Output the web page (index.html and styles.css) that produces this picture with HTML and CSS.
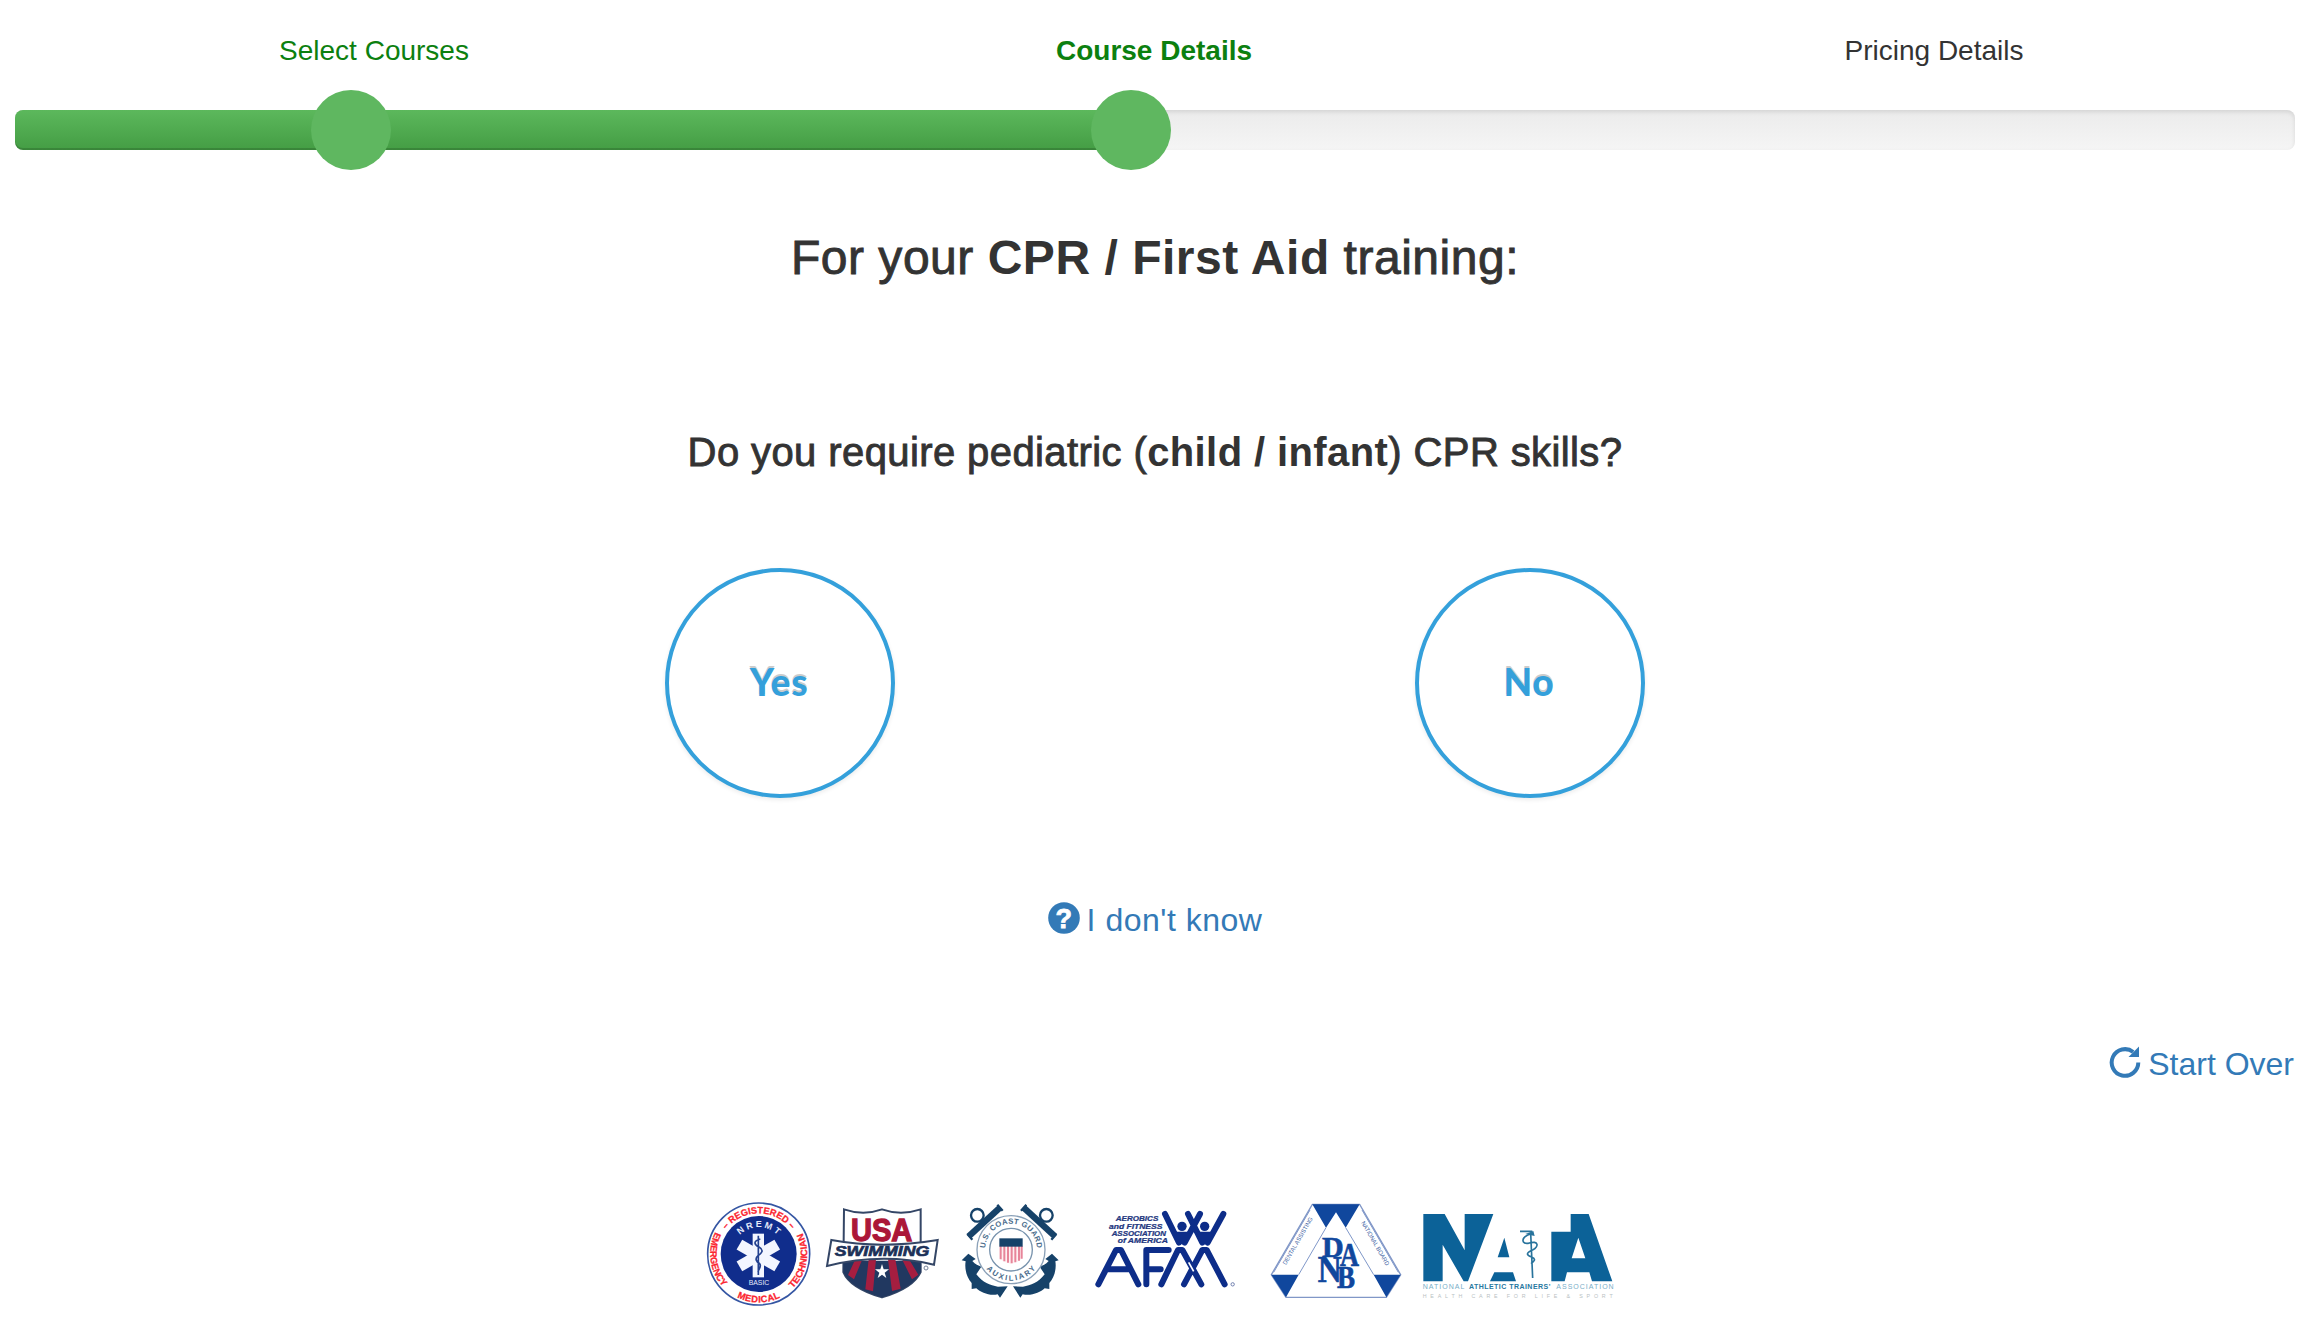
FILE: index.html
```html
<!DOCTYPE html>
<html lang="en">
<head>
<meta charset="utf-8">
<title>Course Details</title>
<link rel="stylesheet" href="styles.css">
</head>
<body>
<main class="wizard">
  <ol class="steps">
    <li class="step done">Select Courses</li>
    <li class="step done current">Course Details</li>
    <li class="step">Pricing Details</li>
  </ol>
  <div class="progress">
    <div class="progress-bar" style="width: 49%"></div>
    <span class="dot dot-first"></span>
    <span class="dot dot-second"></span>
  </div>
  <h1 class="title">For your <b>CPR / First Aid</b> training:</h1>
  <h2 class="question">Do you require pediatric (<b>child / infant</b>) CPR skills?</h2>
  <div class="answers">
    <div class="answer"><button class="round">Yes</button></div>
    <div class="answer"><button class="round">No</button></div>
  </div>
  <a class="link unsure">
    <svg class="icon" viewBox="0 0 32 32"><circle cx="16" cy="16" r="15.8" fill="#337ab7"/><text x="16" y="25.5" font-size="27" font-weight="bold" text-anchor="middle" fill="#fff" stroke="#fff" stroke-width=".8">?</text></svg>
    <span class="unsure-text">I don't know</span>
  </a>
  <a class="link restart">
    <svg class="icon" viewBox="0 0 32 32"><path d="M29.3 16.5A13.3 13.3 0 1 1 24.2 6" fill="none" stroke="#337ab7" stroke-width="4"/><path d="M30 .5V11H19.500Z" fill="#337ab7"/></svg>
    <span class="restart-text">Start Over</span>
  </a>
  <div class="logos">
    <svg width="114" height="108" viewBox="15 30 342 324">
      <defs>
        <path id="ring-top" d="M54 192A122 122 0 0 1 298 192"/>
        <path id="ring-low" d="M73.100 89.100A145.500 145.500 0 1 0 278.900 89.100"/>
        <path id="ring-in" d="M96 192A80 80 0 0 1 256 192"/>
      </defs>
      <circle cx="176" cy="192" r="153" fill="#fff" stroke="#3556a3" stroke-width="5"/>
      <circle cx="176" cy="192" r="114" fill="#102d8c"/>
      <g font-weight="bold" fill="#fb2530" stroke="#fb2530" stroke-width=".8" font-size="28">
        <text><textPath href="#ring-top" startOffset="50%" text-anchor="middle" textLength="226" lengthAdjust="spacingAndGlyphs">– REGISTERED –</textPath></text>
        <text><textPath href="#ring-low" startOffset="46" textLength="176" lengthAdjust="spacingAndGlyphs">EMERGENCY</textPath></text>
        <text><textPath href="#ring-low" startOffset="50%" text-anchor="middle" textLength="134">MEDICAL</textPath></text>
        <text><textPath href="#ring-low" startOffset="456" textLength="180" lengthAdjust="spacingAndGlyphs">TECHNICIAN</textPath></text>
      </g>
      <g fill="#e5ebfb" text-anchor="middle">
        <text font-size="27" font-weight="bold"><textPath href="#ring-in" startOffset="50%" textLength="124">NREMT</textPath></text>
        <text x="177" y="284" font-size="21" textLength="62" lengthAdjust="spacingAndGlyphs">BASIC</text>
      </g>
      <g fill="#f3f6ff"><rect x="158" y="131" width="34" height="131"/><rect x="158" y="131" width="34" height="131" transform="rotate(60 175 196.500)"/><rect x="158" y="131" width="34" height="131" transform="rotate(-60 175 196.500)"/></g>
      <path d="M175 137V255M181 147C155 154 166 166 177 171C194 181 184 191 174 197C163 206 170 216 178 220C187 228 176 236 174 246" fill="none" stroke="#23418f" stroke-width="5"/>
    </svg>
    <svg width="132" height="108" viewBox="357 30 396 324">
      <path d="M432 58Q490 78 546 58Q602 78 662 58V246Q640 294 546 322Q450 294 430 246Z" fill="#fff" stroke="#344666" stroke-width="6"/>
      <path d="M430 212H662V246Q640 294 546 322Q450 294 430 246Z" fill="#213860"/>
      <path d="M466 208H487L462 268L444 255ZM506 208H528L519 304L496 298ZM564 208H586L602 296L576 303ZM606 208H627L655 254L636 268Z" fill="#a51e40"/>
      <path d="M394 150Q546 178 713 150L702 224Q546 187 381 228Z" fill="#fff" stroke="#344666" stroke-width="6"/>
      <text x="545" y="154" text-anchor="middle" font-size="92" font-weight="bold" fill="#ab1738" stroke="#ab1738" stroke-width="4" textLength="184" lengthAdjust="spacingAndGlyphs">USA</text>
      <text x="546" y="197" text-anchor="middle" font-size="44" font-weight="bold" font-style="italic" fill="#1c3158" stroke="#1c3158" stroke-width="2" textLength="284" lengthAdjust="spacingAndGlyphs">SWIMMING</text>
      <path d="M546 222L551 238H567L554 248L559 264L546 254L533 264L538 248L525 238H541Z" fill="#fff"/>
      <circle cx="678" cy="234" r="6" fill="none" stroke="#77839a" stroke-width="3"/>
    </svg>
    <svg width="126" height="108" viewBox="3 30 378 324">
      <defs>
        <path id="cg-top" d="M105 179A78 78 0 0 1 261 179"/>
        <path id="cg-low" d="M90 179A93 93 0 0 0 276 179"/>
      </defs>
      <g>
        <circle cx="82" cy="76" r="19" fill="none" stroke="#164269" stroke-width="7"/>
        <path d="M56 139L150 53" stroke="#164269" stroke-width="19" fill="none"/>
        <path d="M142 44L158 62M52 132L67 149" stroke="#164269" stroke-width="7"/>
        <path d="M35 211L55 191L77 207L67 213C76 224 85 227 94 230L79 253C98 278 120 286 144 290L173 289L150 323L143 313C119 319 92 307 79 295L65 297L65 279C50 263 43 236 47 214Z" fill="#164269"/>
      </g>
      <g transform="matrix(-1 0 0 1 363 0)">
        <circle cx="74" cy="76" r="19" fill="none" stroke="#164269" stroke-width="7"/>
        <path d="M48 139L142 53" stroke="#164269" stroke-width="19" fill="none"/>
        <path d="M134 44L150 62M44 132L59 149" stroke="#164269" stroke-width="7"/>
        <path d="M37 211L57 191L77 207L67 213C76 224 85 227 94 230L79 253C98 278 120 286 144 290L174 289L152 323L145 313C119 319 92 307 79 295L65 297L65 279C50 263 43 236 47 214Z" fill="#164269"/>
      </g>
      <circle cx="183" cy="179" r="102" fill="#fff" stroke="#8ba1b8" stroke-width="4"/>
      <circle cx="183" cy="179" r="64" fill="#fff" stroke="#7893ad" stroke-width="4"/>
      <g fill="#496b8b" font-size="23" font-weight="bold">
        <text><textPath href="#cg-top" startOffset="50%" text-anchor="middle" textLength="236">U.S. COAST GUARD</textPath></text>
        <text><textPath href="#cg-low" startOffset="50%" text-anchor="middle" textLength="170">AUXILIARY</textPath></text>
      </g>
      <path d="M149 166H217V203Q213 213 183 222Q152 213 149 203Z" fill="#fff0f2"/>
      <path d="M152 168V208M163 168V214M174 168V218M185 168V220M196 168V217M207 168V212M215 168V206" stroke="#e7859a" stroke-width="6"/>
      <path d="M148 145H218V170H148Z" fill="#164269"/>
    </svg>
    <svg width="176" height="108" viewBox="381 30 528 324">
      <g fill="#233780" font-size="21" font-weight="bold" font-style="italic" stroke="#233780" stroke-width=".7">
        <text x="497" y="94" textLength="128" lengthAdjust="spacingAndGlyphs">AEROBICS</text>
        <text x="477" y="116" textLength="160" lengthAdjust="spacingAndGlyphs">and FITNESS</text>
        <text x="485" y="138" textLength="163" lengthAdjust="spacingAndGlyphs">ASSOCIATION</text>
        <text x="503" y="159" textLength="151" lengthAdjust="spacingAndGlyphs">of AMERICA</text>
      </g>
      <g fill="none" stroke="#0d2d89" stroke-width="18" stroke-linecap="round" stroke-linejoin="round">
        <path d="M445 283L498 180H513L565 283M476 238H540M589 283V180H656M589 238H632"/>
        <path d="M634 283L684 180H697L754 283M702 283L757 180H770L824 283"/>
        <path d="M645 72L687 158M714 72L757 158M750 72L704 158M820 72L773 158"/>
      </g>
      <path d="M668 125H721L704 162H687ZM739 125H791L773 162H755Z" fill="#0d2d89"/>
      <circle cx="696" cy="109" r="14" fill="#0d2d89"/><circle cx="764" cy="109" r="14" fill="#0d2d89"/>
      <path d="M716 217L731 244" stroke="#fff" stroke-width="5"/>
      <circle cx="848" cy="283" r="5" fill="none" stroke="#7180b0" stroke-width="3"/>
    </svg>
    <svg width="158" height="108" viewBox="9 30 474 324">
      <path d="M187 43H329L452 254L409 322H108L64 254Z" fill="#fff" stroke="#8197c7" stroke-width="4"/>
      <path d="M187 43H329L287 113L258 67L228 113ZM64 254H146L108 322ZM371 254H452L409 322Z" fill="#10479d"/>
      <path d="M146 254L228 113M287 113L371 254M71 247L180 60M445 247L336 60" fill="none" stroke="#8098c9" stroke-width="3"/>
      <text transform="translate(108 226) rotate(-60)" font-size="18" fill="#4264a4" textLength="162" lengthAdjust="spacingAndGlyphs">DENTAL ASSISTING</text>
      <text transform="translate(333 98) rotate(60)" font-size="18" fill="#4264a4" textLength="150" lengthAdjust="spacingAndGlyphs">NATIONAL BOARD</text>
      <g class="serif" font-weight="bold" fill="#10479d" stroke="#10479d" stroke-width="2">
        <text x="216" y="202" font-size="90" textLength="65" lengthAdjust="spacingAndGlyphs">D</text>
        <text x="270" y="228" font-size="98" textLength="57" lengthAdjust="spacingAndGlyphs">A</text>
        <text x="203" y="276" font-size="114" textLength="72" lengthAdjust="spacingAndGlyphs">N</text>
        <text x="261" y="295" font-size="96" textLength="54" lengthAdjust="spacingAndGlyphs">B</text>
      </g>
    </svg>
    <svg width="206" height="108" viewBox="483 30 618 324">
      <path d="M520 72H584L644 181V72H730L654 274H641L578 164V274H520Z" fill="#0c6298"/>
      <path d="M763 143L778 202H743ZM733 247H789L798 274H720Z" fill="#0c6298"/>
      <path fill-rule="evenodd" d="M962 72H1016L1087 274H1026L1018 247H951L944 274H904V125H962ZM985 143L965 205H1006Z" fill="#0c6298"/>
      <path d="M810 124H847M842 128L848 264M841 132C810 143 815 163 835 160C868 149 866 171 849 179C826 189 829 196 845 201C860 207 852 215 843 221" fill="none" stroke="#28739c" stroke-width="5"/>
      <path d="M826 132L850 123L854 138Z" fill="#28739c"/>
      <g fill="#79aec8" font-size="21"><text x="518" y="298" textLength="125">NATIONAL</text><text x="657" y="298" fill="#27789f" font-weight="bold" textLength="244">ATHLETIC TRAINERS'</text><text x="919" y="298" textLength="172">ASSOCIATION</text></g>
      <text x="518" y="323" font-size="16" fill="#b9bfc3" textLength="570">HEALTH CARE FOR LIFE &amp; SPORT</text>
    </svg>
  </div>
</main>
</body>
</html>
```
FILE: styles.css
```css
* { box-sizing: border-box; }

body {
  margin: 0;
  background: #fff;
  color: #333;
  font-family: "Liberation Sans", Arial, sans-serif;
}

.wizard {
  display: flex;
  flex-direction: column;
  padding: 30px 22px 0 15px;
}

.steps {
  display: grid;
  grid-template-columns: repeat(3, 780px);
  height: 40px;
  margin: 0 0 40px -31px;
  padding: 0;
  list-style: none;
  font-size: 28px;
  line-height: 41px;
  text-align: center;
}

.step.done { color: #0c800f; }
.step.current { font-weight: bold; }

.progress {
  position: relative;
  height: 40px;
  border-radius: 8px;
  background: linear-gradient(#ebebeb, #f5f5f5);
  box-shadow: inset 0 2px 4px rgba(0, 0, 0, 0.1);
}

.progress-bar {
  height: 100%;
  border-radius: 8px 0 0 8px;
  background: linear-gradient(#5cb85c, #449d44);
  box-shadow: inset 0 -2px 0 rgba(0, 0, 0, 0.15);
}

.dot {
  position: absolute;
  top: -20px;
  width: 80px;
  height: 80px;
  border-radius: 50%;
  background: #5fb760;
}

.dot-first { left: 296px; }
.dot-second { left: 1076px; }

.title, .question {
  margin: 0;
  font-weight: normal;
  text-align: center;
  -webkit-text-stroke: 0.9px #333;
}

.title b, .question b { -webkit-text-stroke: 0; }

.title {
  margin-top: 78px;
  font-size: 48px;
  line-height: 60px;
  letter-spacing: 0.52px;
}

.question {
  margin-top: 140px;
  font-size: 40px;
  line-height: 48px;
  letter-spacing: 0.4px;
}

.answers {
  display: grid;
  grid-template-columns: 750px 750px;
  justify-content: center;
  margin-top: 92px;
}

.answer { display: flex; justify-content: center; }

.round {
  width: 230px;
  height: 230px;
  padding: 0 2px 4px 0;
  border: 4px solid #34a0db;
  border-radius: 50%;
  background: #fff;
  box-shadow: 0 2px 4px rgba(0, 0, 0, 0.08);
  color: #34a0db;
  font: 900 37px Lato, sans-serif;
  letter-spacing: 0.8px;
  text-shadow: 0 -2px 0 #ccc;
}

.link {
  display: flex;
  height: 40px;
  color: #337ab7;
  font-size: 32px;
  line-height: 37px;
}

.icon { width: 32px; height: 32px; }

.unsure {
  justify-content: center;
  gap: 7px;
  margin-top: 104px;
  letter-spacing: 0.5px;
}

.restart {
  justify-content: flex-end;
  gap: 7px;
  margin-top: 104px;
  padding-right: 1px;
}

.logos {
  display: flex;
  margin: 114px 0 0 690px;
}

.serif { font-family: "Liberation Serif", serif; }
```
